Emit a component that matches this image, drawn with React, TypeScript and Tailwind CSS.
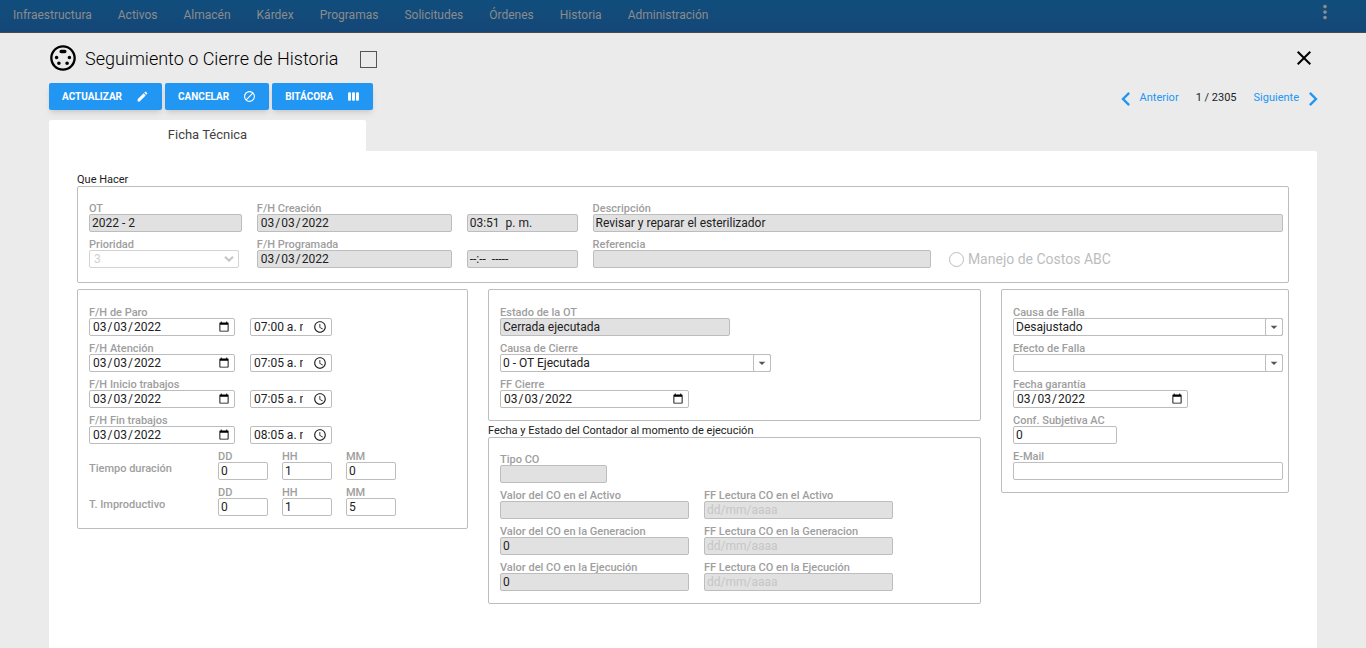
import { ReactNode, useId } from "react";
import { clsx } from "clsx";
import {
  MdArrowDropDown,
  MdBlock,
  MdChevronLeft,
  MdChevronRight,
  MdClose,
  MdEdit,
  MdMoreVert,
  MdSchedule,
  MdSettingsInputSvideo,
  MdViewWeek,
} from "react-icons/md";

const menu = [
  "Infraestructura",
  "Activos",
  "Almacén",
  "Kárdex",
  "Programas",
  "Solicitudes",
  "Órdenes",
  "Historia",
  "Administración",
];

const control =
  "block h-[18px] w-full min-w-0 rounded-xs border border-[#bdbdbd] px-0.5 text-xs text-[#212121] outline-none";
const labelText =
  "block h-3 text-[11px] leading-3.5 font-medium whitespace-nowrap text-[#9e9e9e]";

type FieldProps = {
  label?: string;
  name?: string;
  value?: string;
  type?: "text" | "date";
  locked?: boolean;
  placeholder?: string;
  className?: string;
};

function Field({
  label,
  name,
  value = "",
  type = "text",
  locked,
  placeholder,
  className,
}: FieldProps) {
  const id = useId();
  return (
    <div className={clsx("min-w-0", className)}>
      {label ? (
        <label htmlFor={id} className={labelText}>
          {label}
        </label>
      ) : (
        <div className="h-3" />
      )}
      <input
        id={id}
        type={type}
        defaultValue={value}
        readOnly={locked}
        placeholder={placeholder}
        aria-label={name}
        className={clsx(
          control,
          "placeholder:text-[#c6c6c6]",
          locked
            ? "bg-[#e1e1e1] [&::-webkit-calendar-picker-indicator]:hidden"
            : "bg-white",
        )}
      />
    </div>
  );
}

function TimeField({ name, value }: { name: string; value: string }) {
  return (
    <div className="relative w-[82px] pt-3">
      <input
        type="text"
        defaultValue={value}
        aria-label={name}
        className="block h-[18px] w-full rounded-xs border border-[#bdbdbd] bg-white pr-7 pl-[3px] text-xs text-[#212121] outline-none"
      />
      <MdSchedule className="pointer-events-none absolute right-[5px] bottom-0.5 size-3.5" />
    </div>
  );
}

type ComboProps = { label: string; value: string; className?: string };

function Combo({ label, value, className }: ComboProps) {
  const id = useId();
  return (
    <div className={clsx("relative min-w-0", className)}>
      <label htmlFor={id} className={labelText}>
        {label}
      </label>
      <select
        id={id}
        defaultValue={value}
        className={clsx(control, "appearance-none bg-white")}
      >
        <option>{value}</option>
      </select>
      <span className="pointer-events-none absolute right-0 bottom-0 flex h-[18px] w-[18px] items-center justify-center rounded-xs border border-[#bdbdbd]">
        <MdArrowDropDown className="size-4 shrink-0 text-[#555]" />
      </span>
    </div>
  );
}

function Duration({ label, values }: { label: string; values: string[] }) {
  return (
    <div className="flex items-end">
      <p className={clsx(labelText, "mb-1.5 w-[129px]")}>{label}</p>
      <div className="flex gap-3.5">
        {["DD", "HH", "MM"].map((unit, i) => (
          <Field
            key={unit}
            label={unit}
            value={values[i]}
            className="w-[50px]"
          />
        ))}
      </div>
    </div>
  );
}

function Box({
  children,
  className,
}: {
  children: ReactNode;
  className?: string;
}) {
  return (
    <div
      className={clsx(
        "rounded-xs border border-[#bdbdbd] pr-[5px] pb-3 pl-[11px]",
        className,
      )}
    >
      {children}
    </div>
  );
}

function ActionButton({ text, icon }: { text: string; icon: ReactNode }) {
  return (
    <button className="flex h-[27px] items-center justify-between gap-3.5 rounded-xs bg-[#2196f3] px-[13px] text-[10px] font-bold text-white shadow-md">
      {text}
      {icon}
    </button>
  );
}

const stops = [
  ["F/H de Paro", "07:00 a. m."],
  ["F/H Atención", "07:05 a. m."],
  ["F/H Inicio trabajos", "07:05 a. m."],
  ["F/H Fin trabajos", "08:05 a. m."],
];

const counters = [
  ["en el Activo", ""],
  ["en la Generacion", "0"],
  ["en la Ejecución", "0"],
];

export default function App() {
  return (
    <div className="flex min-h-screen flex-col bg-[#ebebeb] font-['Roboto',sans-serif] text-[#212121]">
      <header className="flex h-[33px] items-center justify-between border-b border-[#4a4a4a] bg-linear-to-b from-[#114e7d] to-[#144777] pr-[30px] pl-[13px]">
        <nav className="flex gap-[26px] pb-0.5 text-xs text-[#8c8c8c]">
          {menu.map((item) => (
            <a key={item} href="#">
              {item}
            </a>
          ))}
        </nav>
        <button aria-label="Más opciones" className="pb-2 text-[#8c8c8c]">
          <MdMoreVert className="size-[22px]" />
        </button>
      </header>

      <main className="mx-[49px] flex flex-1 flex-col">
        <div className="flex h-[50px] items-center justify-between">
          <div className="flex items-center">
            <MdSettingsInputSvideo className="size-7 text-black" />
            <div className="flex items-center gap-[22px] pt-0.5 pl-2">
              <h1 className="text-lg font-light text-black">
                Seguimiento o Cierre de Historia
              </h1>
              <input
                type="checkbox"
                aria-label="Seleccionar historia"
                className="size-[17px] appearance-none border border-[#555]"
              />
            </div>
          </div>
          <button aria-label="Cerrar" className="mr-px text-black">
            <MdClose className="size-6" />
          </button>
        </div>

        <div className="flex h-[27px] items-center justify-between">
          <div className="flex gap-[3px]">
            <ActionButton
              text="ACTUALIZAR"
              icon={<MdEdit className="size-[13px]" />}
            />
            <ActionButton
              text="CANCELAR"
              icon={<MdBlock className="size-[13px]" />}
            />
            <ActionButton
              text="BITÁCORA"
              icon={<MdViewWeek className="size-[13px]" />}
            />
          </div>
          <div className="-mr-2.5 flex items-center gap-[17px] pt-1 text-[11px]">
            <a href="#" className="flex items-center text-[#2196f3]">
              <MdChevronLeft className="size-7" />
              Anterior
            </a>
            <span>1 / 2305</span>
            <a href="#" className="flex items-center text-[#2196f3]">
              Siguiente
              <MdChevronRight className="size-7" />
            </a>
          </div>
        </div>

        <div className="mt-2.5 flex h-[31px] w-1/4 items-center justify-center rounded-t-xs bg-white pb-0.5 text-[13px] text-[#424242]">
          Ficha Técnica
        </div>

        <section className="flex-1 rounded-tr-xs bg-white px-7 pt-[21px]">
          <h2 className="h-3.5 text-[11px] leading-4">Que Hacer</h2>
          <Box className="pt-[15px]">
            <div className="mb-0.5 grid grid-cols-[153fr_195fr_111fr_691fr] gap-x-[15px] gap-y-1.5">
              <Field label="OT" value="2022 - 2" locked />
              <Field
                label="F/H Creación"
                type="date"
                value="2022-03-03"
                locked
              />
              <Field name="Hora de creación" value="03:51  p. m." locked />
              <Field
                label="Descripción"
                value="Revisar y reparar el esterilizador"
                locked
              />

              <div className="relative mr-[3px]">
                <label htmlFor="prioridad" className={labelText}>
                  Prioridad
                </label>
                <select
                  id="prioridad"
                  disabled
                  className="block h-[18px] w-full appearance-none rounded-xs border border-[#d3d3d3] px-1 text-xs text-[#d0d0d0] opacity-100"
                >
                  <option>3</option>
                </select>
                <svg
                  viewBox="0 0 10 6"
                  className="pointer-events-none absolute right-[5px] bottom-1.5 h-1.5 w-2.5 fill-none stroke-[#c4c4c4] stroke-2"
                >
                  <path d="M1 .8 5 4.6 9 .8" />
                </svg>
              </div>
              <Field
                label="F/H Programada"
                type="date"
                value="2022-03-03"
                locked
              />
              <Field name="Hora programada" value="--:--  -----" locked />
              <div className="flex gap-[18px]">
                <Field label="Referencia" locked className="w-[49%]" />
                <label className="mt-3 flex h-[18px] items-center gap-1 text-sm text-[#bdbdbd]">
                  <input
                    type="radio"
                    disabled
                    className="size-[15px] appearance-none rounded-full border border-[#bdbdbd]"
                  />
                  Manejo de Costos ABC
                </label>
              </div>
            </div>
          </Box>

          <div className="mt-1.5 grid grid-cols-[391fr_493fr_288fr] items-start gap-5">
            <Box className="flex flex-col gap-1.5 pt-4">
              {stops.map(([label, time]) => (
                <div key={label} className="flex gap-[15px]">
                  <Field
                    label={label}
                    type="date"
                    value="2022-03-03"
                    className="w-[146px]"
                  />
                  <TimeField name={`${label} hora`} value={time} />
                </div>
              ))}
              <Duration label="Tiempo duración" values={["0", "1", "0"]} />
              <Duration label="T. Improductivo" values={["0", "1", "5"]} />
            </Box>

            <div>
              <Box className="flex flex-col gap-1.5 pt-4">
                <Field
                  label="Estado de la OT"
                  value="Cerrada ejecutada"
                  locked
                  className="w-[230px]"
                />
                <Combo
                  label="Causa de Cierre"
                  value="0 - OT Ejecutada"
                  className="w-[271px]"
                />
                <Field
                  label="FF Cierre"
                  type="date"
                  value="2022-03-03"
                  className="w-[189px]"
                />
              </Box>
              <h2 className="mt-0.5 h-3.5 text-[11px] leading-4">
                Fecha y Estado del Contador al momento de ejecución
              </h2>
              <Box className="flex flex-col gap-1.5 pt-[15px]">
                <Field label="Tipo CO" locked className="w-[107px]" />
                {counters.map(([suffix, value]) => (
                  <div key={suffix} className="flex gap-[15px]">
                    <Field
                      label={`Valor del CO ${suffix}`}
                      value={value}
                      locked
                      className="w-[189px]"
                    />
                    <Field
                      label={`FF Lectura CO ${suffix}`}
                      placeholder="dd/mm/aaaa"
                      locked
                      className="w-[189px]"
                    />
                  </div>
                ))}
              </Box>
            </div>

            <Box className="flex flex-col gap-1.5 pt-4">
              <Combo label="Causa de Falla" value="Desajustado" />
              <Combo label="Efecto de Falla" value="" />
              <Field
                label="Fecha garantía"
                type="date"
                value="2022-03-03"
                className="w-[175px]"
              />
              <Field
                label="Conf. Subjetiva AC"
                value="0"
                className="w-[104px]"
              />
              <Field label="E-Mail" />
            </Box>
          </div>
        </section>
      </main>
    </div>
  );
}
